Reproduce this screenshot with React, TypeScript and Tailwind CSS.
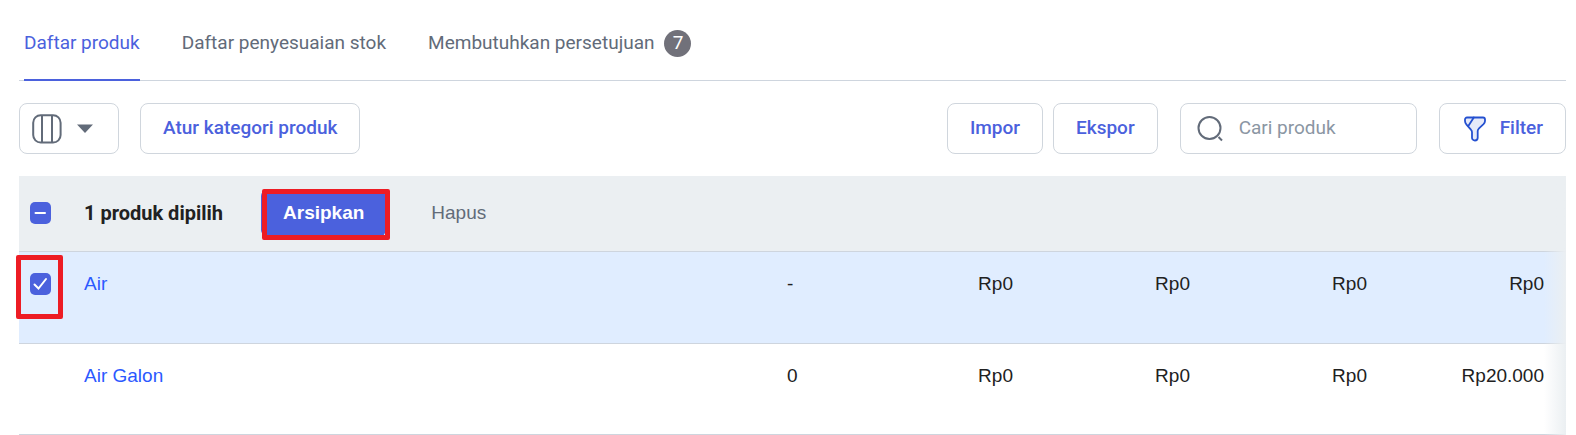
const tabs = [
  { label: "Daftar produk", active: true },
  { label: "Daftar penyesuaian stok" },
  { label: "Membutuhkan persetujuan", count: 7 },
];

const products = [
  { name: "Air", selected: true, stock: "-", prices: ["Rp0", "Rp0", "Rp0", "Rp0"] },
  { name: "Air Galon", selected: false, stock: "0", prices: ["Rp0", "Rp0", "Rp0", "Rp20.000"] },
];

const outlineButton =
  "flex h-[51px] items-center rounded-lg border border-[#d0d6dd] bg-white px-[22px] text-[19px] font-medium text-[#4b61dd]";

const ColumnsIcon = () => (
  <svg width="30" height="30" viewBox="0 0 30 30" fill="none" stroke="#626b79" strokeWidth="2">
    <rect x="1.2" y="1.2" width="27.4" height="27.4" rx="7.5" />
    <path d="M10 1v28M20 1v28" />
  </svg>
);

const SearchIcon = () => (
  <svg
    className="shrink-0"
    width="26"
    height="26"
    viewBox="0 0 26 26"
    fill="none"
    stroke="#626b79"
    strokeWidth="2"
  >
    <circle cx="12.5" cy="12" r="11" />
    <path d="M21.5 21l3.500 3.500" />
  </svg>
);

const FilterIcon = () => (
  <svg
    width="22"
    height="26"
    viewBox="0 0 22 26"
    fill="none"
    stroke="#2450d0"
    strokeWidth="1.8"
    strokeLinecap="round"
    strokeLinejoin="round"
  >
    <path
      d="M3 1.5h16a2 2 0 0 1 2 2V5c0 1.2-.6 2.300-1.500 3.200L15 12.300c-.8.8-1.300 1.700-1.300 2.800v6.700c0 1.500-1.200 2.700-2.800 2.700s-2.900-1.200-2.900-2.700v-5.600c0-1-.4-1.900-1.100-2.600L2.500 8.600C1.500 7.500 1 6.300 1 5V3.500a2 2 0 0 1 2-2z"
      fill="#e6eaf9"
    />
    <path d="M9.800 1.500L4.300 10" />
  </svg>
);

type TickProps = { id: string; label: string; partial?: boolean };

const Tick = ({ id, label, partial }: TickProps) => (
  <span className="relative block h-[22px] w-[21px]">
    <input
      id={id}
      type="checkbox"
      aria-label={label}
      defaultChecked
      className="block h-[22px] w-[21px] appearance-none rounded-[5px] bg-[#4b61dd]"
    />
    <svg
      className="pointer-events-none absolute inset-0"
      width="21"
      height="22"
      viewBox="0 0 21 22"
      fill="none"
      stroke="#fff"
      strokeWidth="2"
      strokeLinecap="round"
    >
      <path d={partial ? "M5.500 11h9.500" : "M4.500 11.500l4 4 7.500-9.500"} />
    </svg>
  </span>
);

const Tabs = () => (
  <nav className="flex gap-[42px] border-b border-[#ced5de] px-[5px]">
    {tabs.map((tab) => (
      <a
        key={tab.label}
        href="#"
        className={
          tab.active
            ? "-mb-px flex h-[81px] items-center border-b-2 border-[#4b61dd] pt-2 text-[19px] text-[#4b61dd]"
            : "-mb-px flex h-[81px] items-center gap-[10px] border-b-2 border-transparent pt-2 text-[19px] text-[#626b79]"
        }
      >
        {tab.label}
        {tab.count && (
          <span className="flex size-[27px] items-center justify-center rounded-full bg-[#71717a] text-[19px] text-white">
            {tab.count}
          </span>
        )}
      </a>
    ))}
  </nav>
);

const Toolbar = () => (
  <div className="flex items-center py-[22px]">
    <button
      type="button"
      aria-label="Atur kolom"
      className="flex h-[51px] w-[100px] items-center gap-[14px] rounded-lg border border-[#d0d6dd] pl-3"
    >
      <ColumnsIcon />
      <svg width="18" height="10" viewBox="0 0 18 10" fill="#626b79">
        <path d="M1 .5h16L9 9z" />
      </svg>
    </button>
    <button type="button" className={`${outlineButton} ml-[21px]`}>
      Atur kategori produk
    </button>

    <div className="ml-auto flex items-center">
      <button type="button" className={outlineButton}>
        Impor
      </button>
      <button type="button" className={`${outlineButton} ml-[10px]`}>
        Ekspor
      </button>
      <label className="ml-[22px] flex h-[51px] w-[237px] items-center gap-4 rounded-lg border border-[#d0d6dd] px-4">
        <SearchIcon />
        <input
          type="text"
          aria-label="Cari produk"
          placeholder="Cari produk"
          className="w-full min-w-0 text-[19px] text-[#212121] outline-none placeholder:text-[#8b96a3]"
        />
      </label>
      <button type="button" className={`${outlineButton} ml-[22px] gap-[14px] pl-6`}>
        <FilterIcon />
        Filter
      </button>
    </div>
  </div>
);

const ProductTable = () => (
  <div className="relative">
    <table className="w-full table-fixed border-separate border-spacing-0 font-['Liberation_Sans',Arial,sans-serif] text-[19px] leading-6 text-[#212121]">
      <colgroup>
        <col className="w-[43px]" />
        <col />
        <col className="w-[93px]" />
        <col className="w-[177px]" />
        <col className="w-[177px]" />
        <col className="w-[177px]" />
        <col className="w-[177px]" />
      </colgroup>
      <thead>
        <tr className="h-[76px] bg-[#ebeff2] *:border-b *:border-[#ced5de]">
          <th className="p-0 pb-0.5 pl-[11px] text-left">
            <Tick id="select-all" label="Pilih semua produk" partial />
          </th>
          <th colSpan={6} className="p-0 pb-0.5 pl-[22px] text-left font-normal">
            <div className="flex items-center">
              <span className="font-['Roboto',sans-serif] text-[20px] font-bold">
                1 produk dipilih
              </span>
              <div className="relative ml-[38px]">
                <button
                  type="button"
                  className="block h-[46px] rounded-md bg-[#4b61dd] px-[22px] font-bold text-white"
                >
                  Arsipkan
                </button>
                <span className="pointer-events-none absolute -top-px -right-1 -bottom-1 left-px rounded-xs border-5 border-[#ed1c24]" />
              </div>
              <button type="button" className="ml-[45px] text-[#626b79]">
                Hapus
              </button>
            </div>
          </th>
        </tr>
      </thead>
      <tbody>
        {products.map((product) => (
          <tr
            key={product.name}
            className={
              product.selected
                ? "h-[92px] bg-[#e0edff] align-top *:border-b *:border-[#ced5de]"
                : "h-[91px] align-top *:border-b *:border-[#ced5de]"
            }
          >
            <td className="p-0 pt-[21px] pl-[11px]">
              {product.selected && (
                <div className="relative w-[21px]">
                  <Tick id="select-air" label={`Pilih ${product.name}`} />
                  <span className="pointer-events-none absolute -top-[18px] -right-3 -bottom-6 -left-3.5 rounded-xs border-5 border-[#ed1c24]" />
                </div>
              )}
            </td>
            <td className="p-0 pt-5 pl-[22px]">
              <a href="#" className="text-[#2b59ff]">
                {product.name}
              </a>
            </td>
            <td className="p-0 pt-5 pl-[22px]">{product.stock}</td>
            {product.prices.map((price, i) => (
              <td key={i} className="p-0 pt-5 pr-[22px] text-right">
                {price}
              </td>
            ))}
          </tr>
        ))}
      </tbody>
    </table>
    {/* scroll shade on the right edge */}
    <div className="pointer-events-none absolute inset-y-0 right-0 w-[22px] bg-linear-to-r from-[#ebeff2]/0 to-[#ebeff2]" />
  </div>
);

const App = () => {
  return (
    <main className="bg-white pr-[10px] pl-[19px] font-['Roboto',sans-serif]">
      <Tabs />
      <Toolbar />
      <ProductTable />
    </main>
  );
};

export default App;
